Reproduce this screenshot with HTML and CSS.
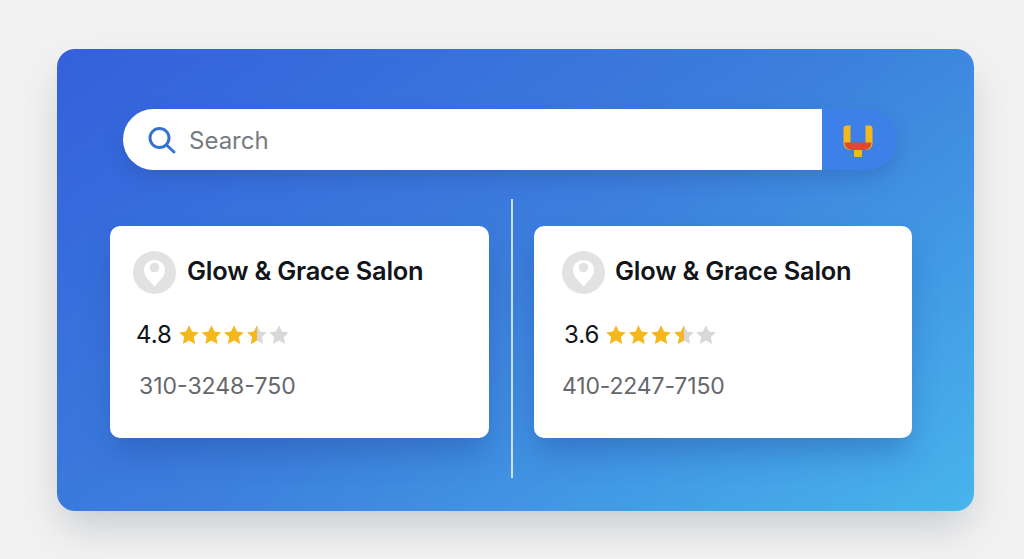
FILE: index.html
```html
<!DOCTYPE html>
<html lang="en">
<head>
<meta charset="utf-8">
<title>Salon search</title>
<link rel="stylesheet" href="styles.css">
</head>
<body>
<svg class="defs" width="0" height="0" aria-hidden="true">
  <defs>
    <path id="star" d="M10 .3l3 6.200 6.800.9-5 4.700 1.300 6.800-6.100-3.300-6.100 3.300 1.300-6.800-5-4.700 6.800-.9z"/>
    <g id="stars">
      <use href="#star" x="1" fill="#f4b81c"/>
      <use href="#star" x="23.500" fill="#f4b81c"/>
      <use href="#star" x="46" fill="#f4b81c"/>
      <use href="#star" x="69" fill="#d6d8da"/>
      <use href="#star" x="91" fill="#d6d8da"/>
      <path d="M79 .3l-3 6.200-6.800.9 5 4.700-1.300 6.800 6.100-3.300z" fill="#f4b81c"/>
    </g>
    <g id="pin">
      <circle cx="21.500" cy="21.500" r="21.500" fill="#e0e2e3"/>
      <path d="M21.500 9c-6 0-10.500 4.400-10.500 10 0 3.600 1.500 6.300 3.500 8.800l7 7.700 7-7.700c2-2.500 3.500-5.200 3.500-8.800 0-5.600-4.500-10-10.500-10z" fill="#fff"/>
      <circle cx="21.500" cy="16.500" r="4.800" fill="#e0e2e3"/>
    </g>
  </defs>
</svg>
<main class="panel">
  <div class="search">
    <div class="search-field">
      <svg class="search-icon" width="30" height="30" viewBox="0 0 30 30" fill="none" stroke="#3573cf" stroke-width="3" stroke-linecap="round">
        <circle cx="11.500" cy="13" r="9.500"/>
        <path d="M18.500 20l7.500 7"/>
      </svg>
      <span class="search-text">Search</span>
    </div>
    <div class="search-btn">
      <svg width="30" height="32" viewBox="0 0 30 32">
        <path d="M.5 3.500a3 3 0 0 1 3-3h4v17.500h15V.5h4a3 3 0 0 1 3 3V18c0 4-3 7-7 7H7.500c-4 0-7-3-7-7z" fill="#f4b81c"/>
        <path d="M11 24h8v7a1 1 0 0 1-1 1h-6a1 1 0 0 1-1-1z" fill="#f4b81c"/>
        <path d="M1.500 17.500h27c0 4.500-3.500 7.500-7.500 7.500H9c-4 0-7.500-3-7.500-7.500z" fill="#dc4a32"/>
      </svg>
    </div>
  </div>
  <div class="results">
    <article class="card">
      <div class="card-head">
        <svg class="pin" width="43" height="43" viewBox="0 0 43 43"><use href="#pin"/></svg>
        <h2 class="name">Glow &amp; Grace Salon</h2>
      </div>
      <div class="rating">
        <span class="score">4.8</span>
        <svg class="stars" width="111" height="20" viewBox="0 0 111 20"><use href="#stars"/></svg>
      </div>
      <p class="phone">310-3248-750</p>
    </article>
    <div class="divider"></div>
    <article class="card card-right">
      <div class="card-head">
        <svg class="pin" width="43" height="43" viewBox="0 0 43 43"><use href="#pin"/></svg>
        <h2 class="name">Glow &amp; Grace Salon</h2>
      </div>
      <div class="rating">
        <span class="score">3.6</span>
        <svg class="stars" width="111" height="20" viewBox="0 0 111 20"><use href="#stars"/></svg>
      </div>
      <p class="phone">410-2247-7150</p>
    </article>
  </div>
</main>
</body>
</html>
```

FILE: styles.css
```css
* { box-sizing: border-box; }
html, body { height: 100%; }
body {
  margin: 0;
  padding: 49px 50px 48px 57px;
  background: #f2f2f2;
  font-family: Inter, "Liberation Sans", sans-serif;
  overflow: hidden;
}
.defs { display: block; height: 0; }
.panel {
  width: 917px;
  height: 462px;
  padding: 60px 0 0 53px;
  border-radius: 18px;
  background: linear-gradient(145deg, #3460dc 0%, #3c7fdc 50%, #48b4ec 100%);
  box-shadow: 0 20px 40px -6px rgba(70, 80, 100, .26);
}
.search {
  display: flex;
  width: 774px;
  height: 61px;
  margin-left: 13px;
  border-radius: 31px;
  box-shadow: 0 8px 18px rgba(30, 60, 130, .22);
}
.search-field {
  display: flex;
  align-items: center;
  gap: 11px;
  width: 699px;
  padding-left: 25px;
  border-radius: 31px 0 0 31px;
  background: #fff;
}
.search-text { font-size: 24px; color: #777b80; padding-top: 1px; }
.search-btn {
  display: flex;
  align-items: center;
  justify-content: flex-start;
  width: 75px;
  padding: 2px 0 0 21px;
  border-radius: 0 31px 31px 0;
  background: #3d80e8;
}
.results {
  display: flex;
  align-items: flex-start;
  margin-top: 29px;
}
.divider {
  width: 2px;
  height: 279px;
  margin: 0 21px 0 22px;
  background: rgba(255, 255, 255, .75);
}
.card {
  width: 379px;
  height: 212px;
  margin-top: 27px;
  padding: 25px 0 0 23px;
  border-radius: 10px;
  background: #fff;
  box-shadow: 0 18px 30px -4px rgba(30, 70, 150, .36);
}
.card-right { width: 378px; padding-left: 28px; }
.card-head {
  display: flex;
  align-items: center;
  gap: 11px;
}
.card-right .card-head { gap: 10px; }
.pin { flex: none; }
.name {
  margin: 0 0 4px;
  font-size: 25.400px;
  font-weight: 600;
  letter-spacing: -.2px;
  color: #111418;
}
.rating {
  display: flex;
  align-items: center;
  gap: 6px;
  margin-top: 26px;
  padding-left: 3px;
}
.card-right .rating { padding-left: 2px; }
.score { font-size: 24px; color: #111418; }
.phone {
  margin: 23px 0 0 6px;
  font-size: 23px;
  color: #65686c;
}
.card-right .phone { margin-left: 0; letter-spacing: -.15px; }
```
